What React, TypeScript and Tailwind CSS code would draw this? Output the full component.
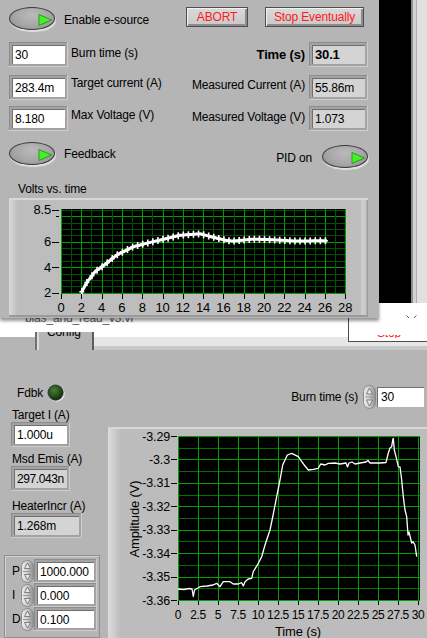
import React from 'react'

type Pt = [number, number]

// volts vs time, (t, v) read off the trace
const VOLT_PTS: Pt[] = [
  [2.0, 2.0], [2.5, 2.75], [3.35, 3.65], [4.15, 4.1], [5.5, 4.96], [7.1, 5.6], [8.8, 5.95],
  [10.4, 6.25], [11.7, 6.5], [13.7, 6.62], [15, 6.35], [16.3, 6.1], [17, 6.05], [18.9, 6.2],
  [20.3, 6.17], [23.2, 6.05], [26.2, 6.08],
]

// amplitude trace, already in page pixels
const AMP_PTS: Pt[] = [
  [178, 589], [184, 589.5], [189, 588.5], [192, 589], [193.3, 596.5], [194.5, 590], [200, 586.7],
  [207, 586], [213, 585], [216.7, 583.3], [220, 586.7], [223.3, 581.7], [230, 581.7], [233.3, 584],
  [238.3, 584], [241.7, 582.7], [243.3, 586], [245, 581.7], [248.3, 579], [251.7, 578.3],
  [253.3, 571.7], [258.3, 563.3], [261.7, 556.7], [265, 545], [270, 530], [272.7, 517],
  [276.7, 496.7], [280, 480], [282.7, 465], [287.3, 455], [291.7, 453.3], [298.3, 456.7],
  [301.7, 461.7], [305, 466], [308.3, 470], [313.3, 469.3], [318.3, 468.3], [320.7, 464],
  [325, 465], [328.3, 463.3], [335, 463], [340, 464], [346, 463], [347.5, 467], [349, 463],
  [352, 462], [355, 464], [360, 463], [366, 462], [368, 460.5], [370, 463], [380, 463],
  [386, 462.5], [388.3, 453], [390, 448], [391.7, 446.7], [392.7, 440], [393.3, 438.3],
  [394.3, 450], [396, 456.7], [398.3, 466.7], [400, 467], [401.7, 480], [403.3, 496.7],
  [405, 510], [406.7, 516.7], [408, 535], [409, 532], [411.7, 543], [413, 541.7], [415, 545],
  [416.7, 556.7],
]

function interp(pts: Pt[], t: number) {
  for (let i = 1; i < pts.length; i++) {
    if (t <= pts[i][0]) {
      const [t0, v0] = pts[i - 1]
      const [t1, v1] = pts[i]
      return v0 + ((t - t0) / (t1 - t0)) * (v1 - v0)
    }
  }
  return pts[pts.length - 1][1]
}

const px = (n: number) => Math.round(n) + 0.5

function Oval({ className = '' }: { className?: string }) {
  return (
    <div className={`relative h-[23px] w-[46px] shrink-0 rounded-[50%] border border-[#3a3a3a] bg-[radial-gradient(ellipse_at_50%_35%,#bababa,#a6a6a6_55%,#8a8a8a)] shadow-[1px_2px_1px_rgba(255,255,255,0.6)] ${className}`}>
      <svg className="absolute right-[2px] top-[6px]" width="14" height="12" viewBox="0 0 14 12">
        <path d="M1 0.5 L13.5 6 L1 11.5 Z" fill="#46ee2c" stroke="#24a018" strokeWidth="1" />
      </svg>
    </div>
  )
}

function LvButton({ children, className = '' }: { children: React.ReactNode; className?: string }) {
  return (
    <div className={`flex h-[20px] shrink-0 items-center justify-center border border-[#4e4e4e] bg-[linear-gradient(to_bottom,#dadada,#c8c8c8)] text-[#ff1a1a] shadow-[inset_1px_1px_0_#f2f2f2,inset_-2px_-2px_0_#8c8c8c] ${className}`}>
      {children}
    </div>
  )
}

function Field({ value, ind, bold, className = '' }: { value: string; ind?: boolean; bold?: boolean; className?: string }) {
  return (
    <div className={`shrink-0 bg-[#a3a3a3] p-[3px] shadow-[inset_-1px_-1px_0_#cecece,inset_1px_1px_0_#8c8c8c] ${className}`}>
      <div className={`flex h-full items-center overflow-hidden whitespace-nowrap border-l border-t border-[#707070] pl-[2px] ${ind ? 'bg-[#d4d4d4]' : 'bg-white'} ${bold ? 'text-[13px] font-bold' : ''}`}>
        {value}
      </div>
    </div>
  )
}

function Spinner({ h = 24, className = '' }: { h?: number; className?: string }) {
  const m = h / 2
  return (
    <svg className={`shrink-0 ${className}`} width="13" height={h} viewBox={`0 0 13 ${h}`}>
      <defs>
        <linearGradient id="spin" x1="0" x2="1" y1="0" y2="0">
          <stop offset="0" stopColor="#f0f0f0" />
          <stop offset="0.5" stopColor="#cacaca" />
          <stop offset="1" stopColor="#8e8e8e" />
        </linearGradient>
      </defs>
      <rect x="0.5" y="0.5" width="12" height={h - 1} rx="6" fill="url(#spin)" stroke="#8a8a8a" />
      <line x1="2" x2="11" y1={m} y2={m} stroke="#9a9a9a" />
      <path d={`M6.5 3 L9.5 ${m - 3} H3.5 Z`} fill="#e6e6e6" stroke="#6a6a6a" strokeWidth="0.8" />
      <path d={`M6.5 ${h - 3} L9.5 ${m + 3} H3.5 Z`} fill="#e6e6e6" stroke="#6a6a6a" strokeWidth="0.8" />
    </svg>
  )
}

function Led({ className = '' }: { className?: string }) {
  return (
    <svg className={`shrink-0 ${className}`} width="18" height="18" viewBox="0 0 18 18">
      <defs>
        <radialGradient id="led" cx="40%" cy="35%" r="65%">
          <stop offset="0" stopColor="#4c7c38" />
          <stop offset="0.6" stopColor="#24521b" />
          <stop offset="1" stopColor="#0f2c09" />
        </radialGradient>
      </defs>
      <circle cx="9.5" cy="9.5" r="8.3" fill="#e4e4e4" />
      <circle cx="8.6" cy="8.6" r="7.6" fill="url(#led)" stroke="#2a2a2a" strokeWidth="0.8" />
    </svg>
  )
}

function VoltsGraph() {
  const gx = (t: number) => 61 + t * 10.15
  const gy = (v: number) => 292.7 - (v - 2) * 12.75
  const marks: Pt[] = []
  for (let t = 2.05; t <= 26.3; t += 0.5) marks.push([gx(t), gy(interp(VOLT_PTS, t))])
  const line: Pt[] = []
  for (let t = 2.0; t <= 26.3; t += 0.1) line.push([gx(t), gy(interp(VOLT_PTS, t))])
  const top = 209
  const bottom = 293
  return (
    <svg width="359" height="119" viewBox="9 198 359 119" className="block">
      <rect x="61" y={top} width="285" height={bottom - top} fill="#000" />
      {Array.from({ length: 14 }, (_, i) => 2 + i * 0.5).map((v) => (
        <line key={v} x1="61" x2="346" y1={px(gy(v))} y2={px(gy(v))} stroke={v % 2 === 0 ? '#00a000' : '#005400'} shapeRendering="crispEdges" />
      ))}
      {Array.from({ length: 29 }, (_, i) => i).map((t) => (
        <line key={t} x1={px(gx(t))} x2={px(gx(t))} y1={top} y2={bottom} stroke={t % 2 === 0 ? '#00a000' : '#005400'} shapeRendering="crispEdges" />
      ))}
      <polyline points={line.map((p) => p.join(',')).join(' ')} fill="none" stroke="#fff" strokeWidth="3" />
      {marks.map(([x, y], i) => (
        <path key={i} d={`M${x - 2.5} ${y} h5 M${x} ${y - 3.5} v7`} stroke="#fff" strokeWidth="1.6" />
      ))}
      {[8.5, 6, 4, 2].map((v) => (
        <g key={v}>
          <line x1="52" x2="59" y1={px(gy(v))} y2={px(gy(v))} stroke="#000" shapeRendering="crispEdges" />
          <text x="51" y={gy(v) + 4.5} textAnchor="end" fontSize="13">{v}</text>
        </g>
      ))}
      <line x1="56" x2="59" y1={px(gy(8))} y2={px(gy(8))} stroke="#000" shapeRendering="crispEdges" />
      {Array.from({ length: 15 }, (_, i) => i * 2).map((t) => (
        <g key={t}>
          <line x1={px(gx(t))} x2={px(gx(t))} y1="294" y2="299" stroke="#000" shapeRendering="crispEdges" />
          <text x={gx(t)} y="312" textAnchor="middle" fontSize="13">{t}</text>
        </g>
      ))}
    </svg>
  )
}

function AmpGraph() {
  const gx = (t: number) => 178 + t * 8
  const gy = (v: number) => 436 + ((-3.29 - v) / 0.01) * 23.43
  const xs = Array.from({ length: 13 }, (_, i) => i * 2.5)
  return (
    <svg width="319" height="211" viewBox="108 427 319 211" className="block">
      <rect x="178" y="436" width="242" height="164" fill="#000" />
      {Array.from({ length: 15 }, (_, i) => i).map((i) => (
        <line key={i} x1="178" x2="420" y1={px(436 + i * 11.715)} y2={px(436 + i * 11.715)} stroke={i % 2 === 0 ? '#00a000' : '#007000'} shapeRendering="crispEdges" />
      ))}
      {xs.map((t) => (
        <line key={t} x1={px(gx(t))} x2={px(gx(t))} y1="436" y2="600" stroke="#00a000" shapeRendering="crispEdges" />
      ))}
      <polyline points={AMP_PTS.map((p) => p.join(',')).join(' ')} fill="none" stroke="#fff" strokeWidth="1.3" strokeLinejoin="round" />
      {Array.from({ length: 8 }, (_, i) => -3.29 - i * 0.01).map((v, i) => (
        <g key={i}>
          <line x1="171" x2="177" y1={px(gy(v))} y2={px(gy(v))} stroke="#000" shapeRendering="crispEdges" />
          <text x="170" y={gy(v) + 4.5} textAnchor="end" fontSize="12.5">{Number(v.toFixed(2)).toString()}</text>
        </g>
      ))}
      {xs.map((t) => (
        <g key={t}>
          <line x1={px(gx(t))} x2={px(gx(t))} y1="601" y2="605" stroke="#000" shapeRendering="crispEdges" />
          <text x={gx(t)} y="619" textAnchor="middle" fontSize="12" letterSpacing="-0.4">{t}</text>
        </g>
      ))}
      <text x="298" y="636" textAnchor="middle" fontSize="13">Time (s)</text>
      <text transform="translate(139 519) rotate(-90)" textAnchor="middle" fontSize="13">Amplitude (V)</text>
    </svg>
  )
}

function UpperWindow() {
  return (
    <div className="absolute left-0 top-0 z-10 flex h-[318px] w-[379px] flex-col bg-[#b5b5b5] shadow-[0_3px_3px_rgba(0,0,0,0.4)]">
      <div className="mt-[7px] flex h-[23px] items-start">
        <Oval className="ml-[9px]" />
        <span className="ml-[9px] mt-[6px] w-[122px] shrink-0">Enable e-source</span>
        <LvButton className="w-[62px]">ABORT</LvButton>
        <LvButton className="ml-[17px] w-[99px]">Stop Eventually</LvButton>
      </div>

      <div className="mt-[12px] flex h-[25px]">
        <Field className="ml-[9px] w-[59px]" value="30" />
        <span className="ml-[3px] mt-[4px]">Burn time (s)</span>
        <span className="ml-auto mt-[6px] text-[13px] font-bold">Time (s)</span>
        <Field ind bold className="ml-[4px] mr-[11px] w-[59px]" value="30.1" />
      </div>

      <div className="mt-[8px] flex h-[25px]">
        <Field className="ml-[9px] w-[59px]" value="283.4m" />
        <span className="ml-[3px] mt-[1px]">Target current (A)</span>
        <span className="ml-auto mt-[3px]">Measured Current (A)</span>
        <Field ind className="ml-[4px] mr-[11px] w-[59px]" value="55.86m" />
      </div>

      <div className="mt-[6px] flex h-[25px]">
        <Field className="ml-[9px] w-[59px]" value="8.180" />
        <span className="ml-[3px] mt-[2px]">Max Voltage (V)</span>
        <span className="ml-auto mt-[4px]">Measured Voltage (V)</span>
        <Field ind className="ml-[4px] mr-[11px] w-[59px]" value="1.073" />
      </div>

      <div className="mt-[11px] flex h-[26px] items-start">
        <Oval className="ml-[9px]" />
        <span className="ml-[9px] mt-[5px]">Feedback</span>
        <span className="ml-auto mt-[9px]">PID on</span>
        <Oval className="ml-[10px] mr-[11px] mt-[3px]" />
      </div>

      <span className="ml-[18px] mt-[14px]">Volts vs. time</span>

      {/* chart frame */}
      <div className="ml-[9px] mt-[2px] h-[119px] w-[359px] bg-[linear-gradient(to_right,#dadada,#c6c6c6_6px,#bdbdbd_9px,#bdbdbd_351px,#d2d2d2_354px,#c2c2c2_357px,#8e8e8e)] shadow-[inset_0_2px_0_#d8d8d8,inset_0_-2px_0_#9a9a9a]">
        <VoltsGraph />
      </div>
    </div>
  )
}

function LowerWindow() {
  return (
    <div className="absolute left-0 top-[303px] flex h-[335px] w-[427px] flex-col bg-[#b5b5b5]">
      {/* title bar */}
      <div className="flex h-[29px] shrink-0 bg-white">
        <span className="pl-[25px] pt-[8px] text-[#5e5e5e]">bias_and_read_v3.vi</span>
        <svg className="ml-auto mr-[10px] mt-[12px]" width="11" height="11" viewBox="0 0 11 11">
          <path d="M0.5 0.5 L10.5 10.5 M10.5 0.5 L0.5 10.5" stroke="#5a5a5a" strokeWidth="1" />
        </svg>
      </div>

      {/* tab strip */}
      <div className="flex h-[18px] shrink-0">
        <div className="w-[35px]">
          <div className="h-[5px] bg-white" />
        </div>
        <div className="w-[2px] bg-[#707070]" />
        <div className="w-[2px] bg-[#dcdcdc]" />
        <div className="w-[53px] overflow-hidden pl-[8px]">
          <div className="-mt-[7px]">Config</div>
        </div>
        <div className="w-[2px] bg-[#5c5c5c]" />
        <div className="flex flex-1 flex-col">
          <div className="h-[5px] bg-white" />
          <div className="h-[9px] bg-[#e6e6e6]" />
          <div className="h-[4px] bg-[#c9c9c9]" />
        </div>
      </div>

      {/* partly hidden stop button */}
      <div className="absolute left-[348px] top-[15px] h-[24px] w-[79px] border-b border-l border-[#4e4e4e] bg-white">
        <div className="ml-[28px] mt-[17px] h-[3px] w-[26px] overflow-hidden text-[#ff1a1a]">
          <div className="-mt-[9px]">Stop</div>
        </div>
      </div>

      <div className="flex flex-1">
        <div className="flex w-[104px] shrink-0 flex-col">
          <div className="mt-[34px] flex h-[18px] items-center pl-[17px]">
            <span>Fdbk</span>
            <Led className="ml-[4px]" />
          </div>
          <span className="mt-[6px] pl-[12px]">Target I (A)</span>
          <Field className="ml-[11px] h-[25px] w-[59px]" value="1.000u" />
          <span className="mt-[5px] pl-[12px]">Msd Emis (A)</span>
          <Field ind className="ml-[11px] h-[25px] w-[59px] tracking-[-0.4px]" value="297.043n" />
          <span className="mt-[8px] pl-[12px]">HeaterIncr (A)</span>
          <Field ind className="ml-[11px] h-[25px] w-[71px]" value="1.268m" />

          <div className="ml-[4px] mt-[17px] w-[96px] flex-1 border border-[#8e8e8e] pt-[3px] shadow-[inset_1px_1px_0_#d2d2d2]">
            {[['P', '1000.000'], ['I', '0.000'], ['D', '0.100']].map(([l, v]) => (
              <div key={l} className="flex h-[24px] items-center">
                <span className="w-[16px] shrink-0 pl-[7px]">{l}</span>
                <Spinner h={23} />
                <Field className="h-[24px] w-[63px]" value={v} />
              </div>
            ))}
          </div>
        </div>

        <div className="flex flex-1 flex-col">
          <div className="mt-[35px] flex h-[23px] items-center justify-end pr-[3px]">
            <span>Burn time (s)</span>
            <Spinner className="ml-[5px]" />
            <div className="ml-[1px] h-[20px] w-[47px] border-l border-t border-[#707070] bg-white pl-[3px] leading-[19px]">30</div>
          </div>
          <div className="ml-[4px] mt-[19px] flex-1 bg-[linear-gradient(to_right,#dcdcdc,#c8c8c8_8px,#bcbcbc_12px,#bcbcbc)] shadow-[inset_0_2px_0_#d8d8d8]">
            <AmpGraph />
          </div>
        </div>
      </div>
    </div>
  )
}

export default function App() {
  return (
    <div className="relative h-[638px] w-[427px] overflow-hidden bg-[#b5b5b5] font-['Liberation_Sans',Arial,sans-serif] text-[12px] leading-[14px] tracking-[-0.15px] text-black">
      {/* window behind, at the right */}
      <div className="absolute left-[379px] top-0 flex h-[303px] w-[48px]">
        <div className="w-[32px] bg-black" />
        <div className="w-[2px] bg-[#8e8e8e]" />
        <div className="w-[3px] bg-[#d2d2d2]" />
        <div className="w-[1px] bg-[#aeaeae]" />
        <div className="flex-1 bg-[#e0e0e0]" />
      </div>
      <LowerWindow />
      <UpperWindow />
    </div>
  )
}
